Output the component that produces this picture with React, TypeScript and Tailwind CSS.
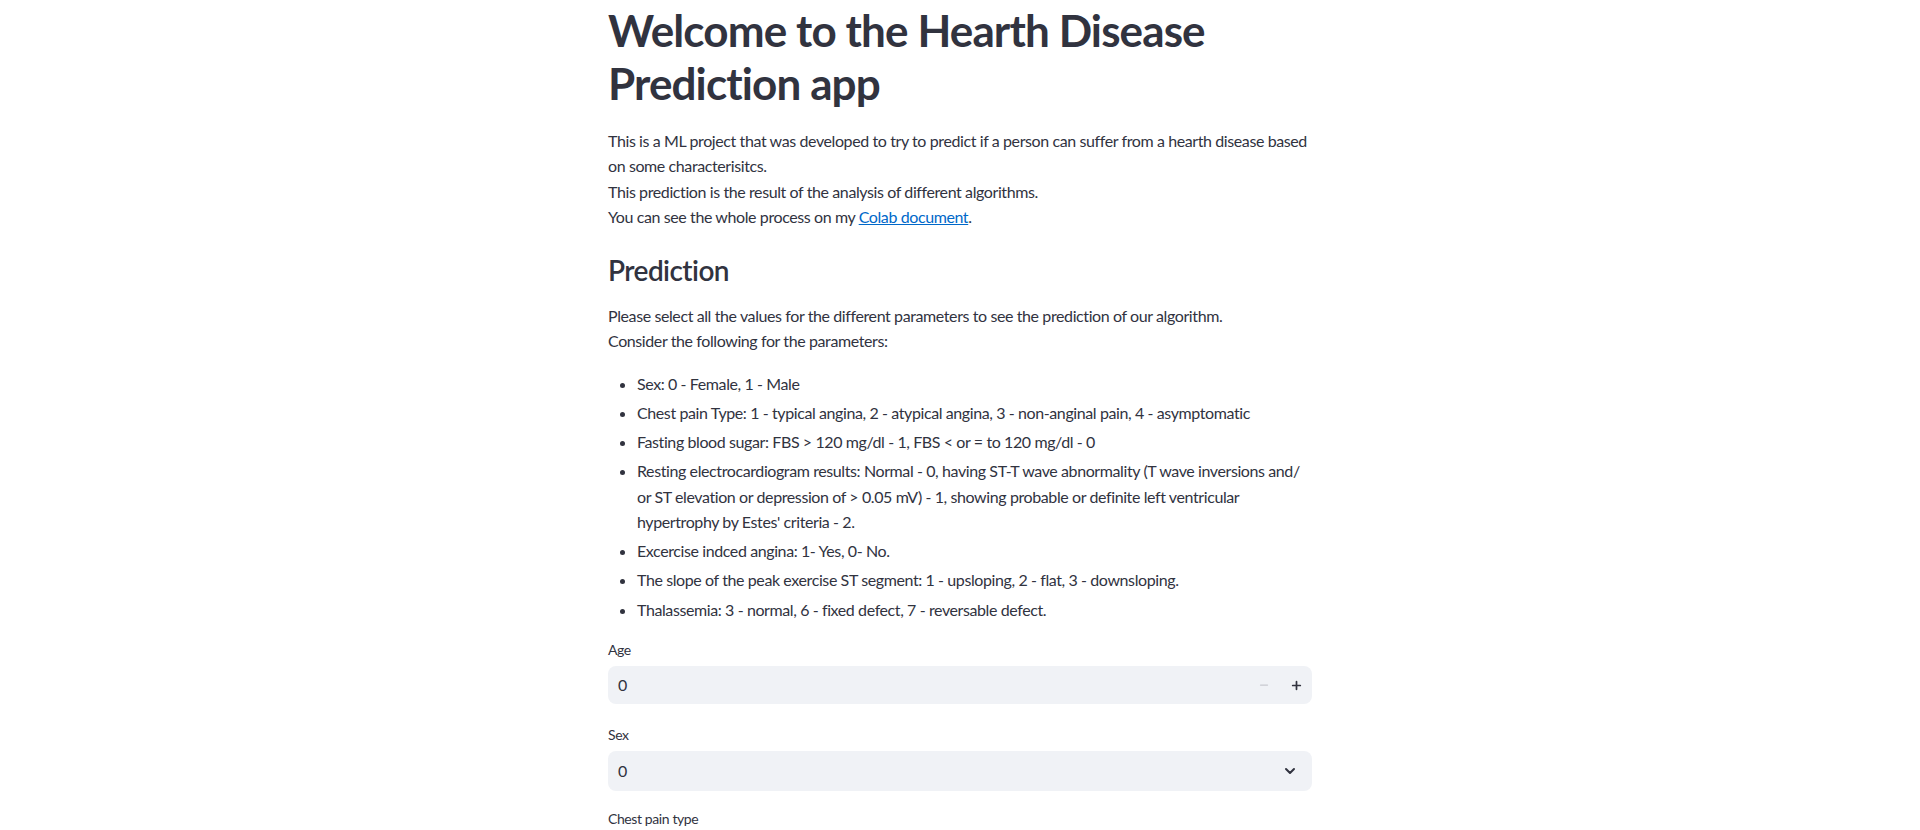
import { Minus, Plus, ChevronDown } from "lucide-react";

const params = [
  "Sex: 0 - Female, 1 - Male",
  "Chest pain Type: 1 - typical angina, 2 - atypical angina, 3 - non-anginal pain, 4 - asymptomatic",
  "Fasting blood sugar: FBS > 120 mg/dl - 1, FBS < or = to 120 mg/dl - 0",
  "Resting electrocardiogram results: Normal - 0, having ST-T wave abnormality (T wave inversions and/ or ST elevation or depression of > 0.05 mV) - 1, showing probable or definite left ventricular hypertrophy by Estes' criteria - 2.",
  "Excercise indced angina: 1- Yes, 0- No.",
  "The slope of the peak exercise ST segment: 1 - upsloping, 2 - flat, 3 - downsloping.",
  "Thalassemia: 3 - normal, 6 - fixed defect, 7 - reversable defect.",
];

function Label({ children }: { children: React.ReactNode }) {
  return <div className="flex h-6 items-center text-sm mb-1">{children}</div>;
}

function NumberInput({ value }: { value: string }) {
  return (
    <div className="flex h-[38px] items-center rounded-lg bg-[#f0f2f6]">
      <span className="flex-1 pl-[10px]">{value}</span>
      <button className="flex h-full w-8 items-center justify-center text-[#c7c9d0]">
        <Minus size={12} strokeWidth={2.5} />
      </button>
      <button className="flex h-full w-8 items-center justify-center text-[#31333f]">
        <Plus size={13} strokeWidth={3.2} />
      </button>
    </div>
  );
}

function SelectBox({ value }: { value: string }) {
  return (
    <div className="flex h-10 items-center rounded-lg bg-[#f0f2f6] pr-[14px]">
      <span className="flex-1 pl-[10px]">{value}</span>
      <ChevronDown size={16} strokeWidth={3} className="text-[#31333f]" />
    </div>
  );
}

export default function App() {
  return (
    <div className="min-h-screen bg-white text-[#31333f] font-['Lato',sans-serif] tracking-[-0.025em]">
      <div className="mx-auto w-[704px] pt-[4px]">
        <h1 className="text-[44px] font-bold leading-[1.2] tracking-[-0.02em]">
          Welcome to the Hearth Disease Prediction app
        </h1>
        <div className="mt-[18px] text-base leading-[1.6]">
          <p>
            This is a ML project that was developed to try to predict if a person can suffer from a hearth disease
            based on some characterisitcs.
          </p>
          <p>This prediction is the result of the analysis of different algorithms.</p>
          <p>
            You can see the whole process on my{" "}
            <a href="#" className="text-[#0068c9] underline">
              Colab document
            </a>
            .
          </p>
        </div>

        <h3 className="mt-6 text-[28px] font-semibold leading-[1.2] tracking-[-0.02em]">Prediction</h3>
        <div className="mt-[15px] text-base leading-[1.6]">
          <p>Please select all the values for the different parameters to see the prediction of our algorithm.</p>
          <p>Consider the following for the parameters:</p>
        </div>
        <ul className="mt-[17px] list-disc pl-[29px] text-base leading-[1.6]">
          {params.map((p) => (
            <li key={p} className="mb-[3.5px] pl-0">
              {p}
            </li>
          ))}
        </ul>

        <div className="mt-4">
          <Label>Age</Label>
          <NumberInput value="0" />
        </div>
        <div className="mt-[19px]">
          <Label>Sex</Label>
          <SelectBox value="0" />
        </div>
        <div className="mt-4">
          <Label>Chest pain type</Label>
          <SelectBox value="0" />
        </div>
      </div>
    </div>
  );
}
